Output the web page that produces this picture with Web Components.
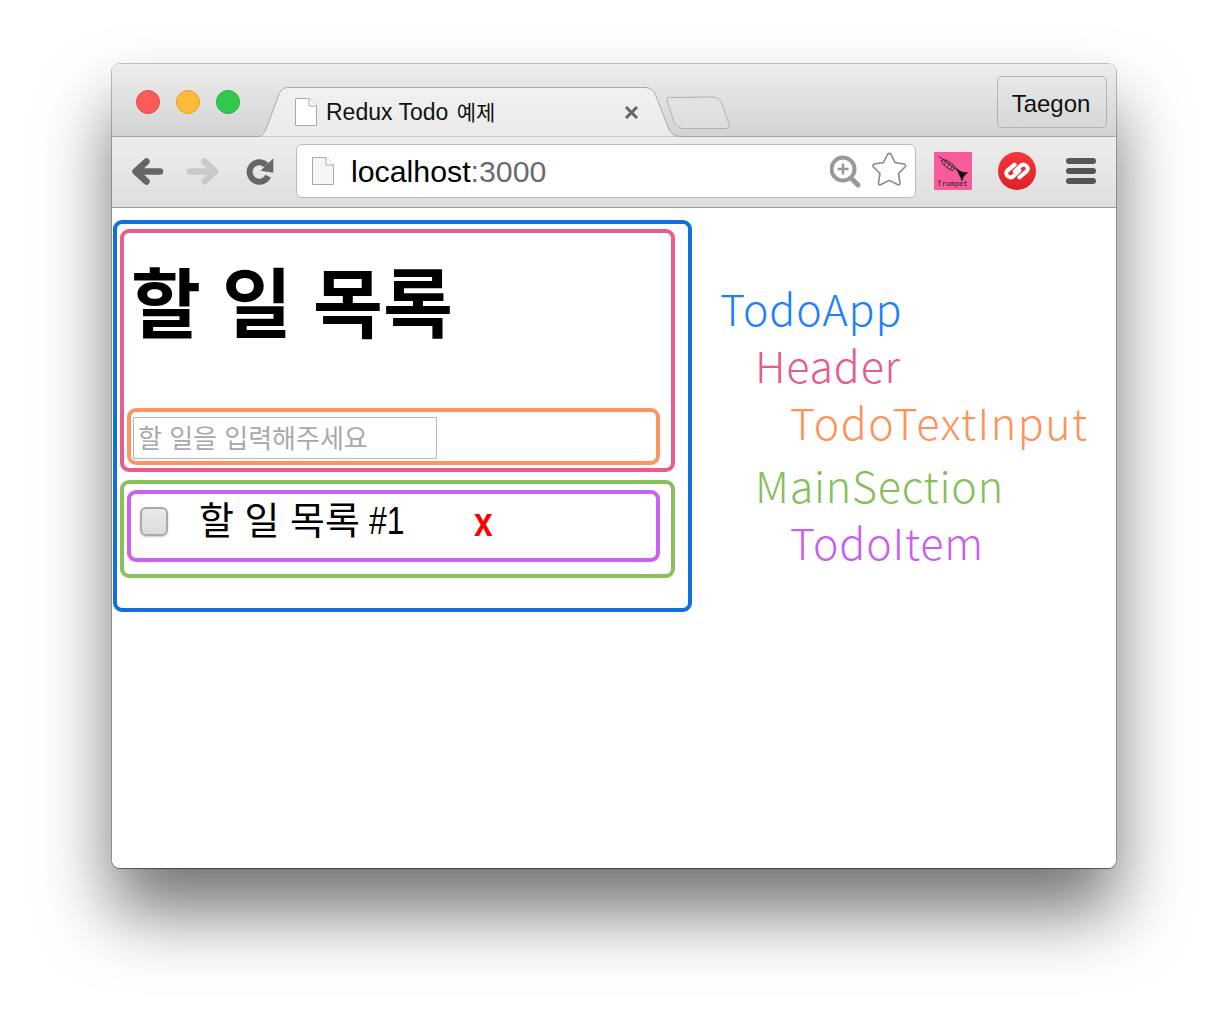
<!DOCTYPE html>
<html lang="ko">
<head>
<meta charset="utf-8">
<title>Redux Todo 예제</title>
<style>
  html, body { margin: 0; background: #fff; }
  body { width: 1228px; height: 1028px; overflow: hidden; font-family: "Liberation Sans", "Noto Sans CJK KR", sans-serif; }
</style>
</head>
<body>
<browser-window>
  <todo-app slot="page"></todo-app>
  <component-legend slot="page"></component-legend>
</browser-window>

<script>
  // Shared base: every component just declares its markup
  class ShadowElement extends HTMLElement {
    constructor() {
      super();
      this.attachShadow({ mode: 'open' });
      const template = document.createElement('template');
      template.innerHTML = this.constructor.markup;
      this.shadowRoot.appendChild(template.content.cloneNode(true));
    }
  }

  const PAGE_ICON = (fill) => `
    <svg width="22" height="28" viewBox="0 0 22 28" style="display:block">
      <path d="M.5 .5H14L21.500 8V27.500H.5Z" fill="${fill}" stroke="#a9a9a9"/>
      <path d="M14 .5V8H21.500" fill="#fff" stroke="#a9a9a9"/>
    </svg>`;

  class TabStrip extends ShadowElement {
    static markup = `
      <style>
        :host { display: flex; height: 73px; box-sizing: border-box; align-items: flex-start;
          background: linear-gradient(#ededed, #d3d3d3); border-bottom: 1px solid #a6a6a6; position: relative; }
        .lights { display: flex; gap: 16px; padding: 26px 0 0 24px; width: 145px; box-sizing: border-box; flex: none; }
        .lights i { flex: none; width: 24px; height: 24px; box-sizing: border-box; border-radius: 50%; border: 1px solid; }
        .tabs { position: relative; flex: none; width: 474px; height: 72px; }
        .tabs svg.shape { position: absolute; left: 0; top: 0; }
        .favicon { position: absolute; left: 38px; top: 34px; }
        .title { position: absolute; left: 69px; top: 33px; font: 23px "Liberation Sans", "Noto Sans CJK KR", sans-serif;
          color: #111; white-space: nowrap; line-height: 30px; }
        .title span { font-size: 21px; margin-left: 2px; }
        .close { position: absolute; left: 367px; top: 41px; }
        .user { margin: 12px 9px 0 auto; width: 110px; height: 52px; box-sizing: border-box; border: 1px solid #b3b3b3;
          border-radius: 5px; display: flex; align-items: center; justify-content: center; padding: 3px 2px 0 0;
          font-size: 24px; color: #111; }
      </style>
      <div class="lights">
        <i style="background:#fc5c57;border-color:#e5493f"></i>
        <i style="background:#fdbb38;border-color:#e4a12a"></i>
        <i style="background:#30c94c;border-color:#2bb13f"></i>
      </div>
      <div class="tabs">
        <svg class="shape" width="474" height="73" viewBox="0 0 474 73">
          <defs><linearGradient id="tabfill" x1="0" y1="0" x2="0" y2="1"><stop offset="0" stop-color="#f1f1f1"/><stop offset="1" stop-color="#ebebeb"/></linearGradient></defs>
          <path d="M0 72.500C5 72.500 7 70 9 65L20 36C22 28 25 23.500 32 23.500H388C394 23.500 397 27 399 32L411 63C413 69 417 72.500 424 72.500Z" fill="url(#tabfill)"/>
          <path d="M0 72.500C5 72.500 7 70 9 65L20 36C22 28 25 23.500 32 23.500H388C394 23.500 397 27 399 32L411 63C413 69 417 72.500 424 72.500" fill="none" stroke="#a9a9a9"/>
          <path d="M413 33.500C410 32.500 409.500 34 410 36L417 58C419 62 421 64.500 427 64.500H469C472 64.500 473 62.500 472 60L465 40C463 35 460 33 454 33Z" fill="#e3e3e3" fill-opacity=".55" stroke="#b0b0b0"/>
        </svg>
        <span class="favicon">${PAGE_ICON('#fff')}</span>
        <span class="title">Redux Todo <span>예제</span></span>
        <svg class="close" width="15" height="15" viewBox="0 0 15 15"><path d="M2 2L13 13M13 2L2 13" stroke="#666" stroke-width="3"/></svg>
      </div>
      <div class="user">Taegon</div>
    `;
  }

  class BrowserToolbar extends ShadowElement {
    static markup = `
      <style>
        :host { display: flex; height: 71px; box-sizing: border-box; align-items: flex-start; position: relative;
          background: linear-gradient(#ededed, #dedede); border-bottom: 1px solid #9c9c9c; }
        .nav { flex: none; width: 184px; height: 70px; }
        .address { flex: none; width: 620px; height: 54px; margin-top: 7px; box-sizing: border-box; background: #fff;
          border: 1px solid #bcbcbc; border-radius: 6px; display: flex; align-items: center; position: relative; }
        .page { margin-left: 15px; }
        .url { margin: 1px 0 0 17px; font-size: 30.300px; color: #000; }
        .url span { color: #6b6b6b; }
        .tools { position: absolute; left: 533px; top: 6px; }
        .ext { flex: none; width: 200px; height: 70px; }
      </style>
      <svg class="nav" viewBox="0 0 184 70" fill="none" stroke-linecap="round" stroke-linejoin="round">
        <path d="M48 34.500H26M34.500 24.500L23.500 34.500L34.500 44.500" stroke="#666" stroke-width="6.500"/>
        <path d="M78 34.500H101M92.500 24.500L103 34.500L92.500 44.500" stroke="#c9c9c9" stroke-width="6.500"/>
        <path d="M156.100 39.100A9.700 9.700 0 1 1 154.200 28.100" stroke="#666" stroke-width="6" stroke-linecap="butt"/>
        <path d="M161.300 21.300V35.700L148.700 33.700Z" fill="#666" stroke="none"/>
      </svg>
      <div class="address">
        <span class="page">${PAGE_ICON('#f6f6f6')}</span>
        <div class="url">localhost<span>:3000</span></div>
        <svg class="tools" width="82" height="40" viewBox="0 0 82 40" fill="none">
          <circle cx="13" cy="18" r="11.500" stroke="#999" stroke-width="4"/>
          <path d="M21 27L28 34" stroke="#999" stroke-width="5" stroke-linecap="round"/>
          <path d="M13 12.500V23.500M7.500 18H18.500" stroke="#999" stroke-width="2.500"/>
          <path d="M57.500 3.500C58.500 2 60 2 61 3.500L65 11.500L74 13C76 13.500 76 15 75 16L68.500 22.500L70 31.500C70.300 33.500 69 34.300 67.500 33.500L59.300 29.300L51 33.500C49.500 34.300 48.300 33.500 48.500 31.500L50 22.500L43.500 16C42.500 15 42.500 13.500 44.500 13L53.500 11.500Z" fill="#fff" stroke="#8a8a8a" stroke-width="1.600"/>
        </svg>
      </div>
      <svg class="ext" viewBox="0 0 200 70">
        <defs><linearGradient id="authy" x1="0" y1="0" x2="0" y2="1"><stop offset="0" stop-color="#f3373c"/><stop offset="1" stop-color="#dd2327"/></linearGradient></defs>
        <rect x="18" y="15" width="38" height="38" fill="#f65b9b"/>
        <g transform="translate(14 11) scale(.3333)" fill="none" stroke="#222" stroke-linecap="round" stroke-linejoin="round" stroke-width="3">
          <path d="M28 26L88 72"/>
          <path d="M34 38C42 30 56 38 76 56L68 68C55 62 38 52 34 38Z" stroke-width="2.500"/>
          <path d="M48 37L42 52M58 44L52 59M67 52L61 64" stroke-width="2"/>
          <path d="M80 62C90 72 100 74 112 74C104 80 98 88 96 98C92 86 86 76 80 62Z" fill="#111"/>
        </g>
        <text x="36.500" y="48.500" text-anchor="middle" font-family="'DejaVu Sans Mono', monospace" font-size="7.200" fill="#222">Trumpet</text>
        <circle cx="101" cy="34" r="19" fill="url(#authy)"/>
        <g transform="translate(101 34) scale(.3333) translate(-69 -69)" fill="none" stroke="#fff" stroke-width="12" stroke-linecap="round" stroke-linejoin="round">
          <path d="M62 50L40 68C34 74 37 84 45 87C50 89 55 88 59 84L76 68"/>
          <path d="M76 88L98 70C104 64 101 54 93 51C88 49 83 50 79 54L62 70"/>
        </g>
        <g fill="#555">
          <rect x="150" y="21" width="30" height="6" rx="3"/>
          <rect x="150" y="31" width="30" height="6" rx="3"/>
          <rect x="150" y="41" width="30" height="6" rx="3"/>
        </g>
      </svg>
    `;
  }

  class BrowserWindow extends ShadowElement {
    static markup = `
      <style>
        :host { display: block; box-sizing: border-box; width: 1004px; height: 804px; margin: 64px 0 0 112px;
          border-radius: 8px; box-shadow: 0 44px 70px rgba(0,0,0,.55), 0 0 0 1px rgba(0,0,0,.22), 0 1px 1px rgba(0,0,0,.35); }
        .frame { height: 100%; box-sizing: border-box; border-radius: 8px; overflow: hidden; background: #fff;
          display: flex; flex-direction: column; position: relative; }
        .page { flex: 1; display: flex; align-items: flex-start; padding: 12px 0 0 1px; }
      </style>
      <div class="frame">
        <tab-strip></tab-strip>
        <browser-toolbar></browser-toolbar>
        <div class="page"><slot name="page"></slot></div>
      </div>
    `;
  }

  class OutlineBox extends ShadowElement {
    static markup = `
      <style>
        :host { display: block; box-sizing: border-box; border: 4px solid var(--line); border-radius: 9px; }
      </style>
      <slot></slot>
    `;
  }

  class TodoItem extends ShadowElement {
    static markup = `
      <style>
        :host { display: flex; align-items: flex-start; height: 64px; box-sizing: border-box; padding: 13px 0 0 9px; }
        input { appearance: none; margin: 0; width: 28px; height: 29px; box-sizing: border-box; flex: none;
          border: 2px solid #a9a9a9; border-radius: 6px; background: linear-gradient(#e8e8e8, #dcdcdc);
          box-shadow: 0 1px 2px #ccc; }
        label { margin: -9px 0 0 31px; width: 275px; flex: none; font-size: 38px; line-height: 46px; color: #000; white-space: nowrap; }
        label span { display: inline-block; margin-left: -2px; transform: scaleX(.84); transform-origin: left; }
        button { all: unset; display: block; color: #f00; font: bold 40px/36px "Liberation Sans", sans-serif; margin-top: -3px;
          transform: scaleX(.84); transform-origin: left; }
      </style>
      <input type="checkbox">
      <label>할 일 목록 <span>#1</span></label>
      <button>x</button>
    `;
  }

  class TodoApp extends ShadowElement {
    static markup = `
      <style>
        :host { display: block; flex: none; width: 579px; }
        .app { --line: #1170dc; height: 392px; padding: 5px 13px 0 3px; }
        .header { --line: #ea5c8c; height: 243px; padding: 0 11px 0 3px; }
        h1 { margin: 0; height: 175px; box-sizing: border-box; padding: 28px 0 0 4px; font-size: 76px; line-height: 90px; font-weight: bold; color: #000; white-space: nowrap; }
        .text-input { --line: #fd9560; height: 57px; padding: 5px 0 0 2px; }
        input { display: block; box-sizing: border-box; width: 304px; height: 42px; margin: 0; padding: 2px 4px 0; border: 1px solid #bababa;
          font: 26px "Liberation Sans", "Noto Sans CJK KR", sans-serif; outline: none; background: #fff; }
        input::placeholder { color: #a9a9a9; opacity: 1; }
        .main { --line: #8ac05a; height: 98px; margin-top: 8px; padding: 6px 11px 0 3px; }
        .item { --line: #c961f1; height: 72px; }
      </style>
      <outline-box class="app">
        <outline-box class="header">
          <h1>할 일 목록</h1>
          <outline-box class="text-input"><input type="text" placeholder="할 일을 입력해주세요"></outline-box>
        </outline-box>
        <outline-box class="main">
          <outline-box class="item"><todo-item></todo-item></outline-box>
        </outline-box>
      </outline-box>
    `;
  }

  class ComponentLegend extends ShadowElement {
    static markup = `
      <style>
        :host { display: flex; flex-direction: column; flex: none; padding: 59px 0 0 28px; letter-spacing: .8px;
          font: 300 43px/57px "Noto Sans CJK KR", "Noto Sans", sans-serif; white-space: nowrap; }
        .l1 { padding-left: 35px; }
        .l2 { padding-left: 70px; }
        .gap { margin-top: 6px; }
      </style>
      <div style="color:#1a80ff">TodoApp</div>
      <div class="l1" style="color:#e85a8a">Header</div>
      <div class="l2" style="color:#ff9259;letter-spacing:1.500px">TodoTextInput</div>
      <div class="l1 gap" style="color:#85bf5b">MainSection</div>
      <div class="l2" style="color:#c85ff0">TodoItem</div>
    `;
  }

  customElements.define('tab-strip', TabStrip);
  customElements.define('browser-toolbar', BrowserToolbar);
  customElements.define('browser-window', BrowserWindow);
  customElements.define('outline-box', OutlineBox);
  customElements.define('todo-item', TodoItem);
  customElements.define('todo-app', TodoApp);
  customElements.define('component-legend', ComponentLegend);
</script>
</body>
</html>
